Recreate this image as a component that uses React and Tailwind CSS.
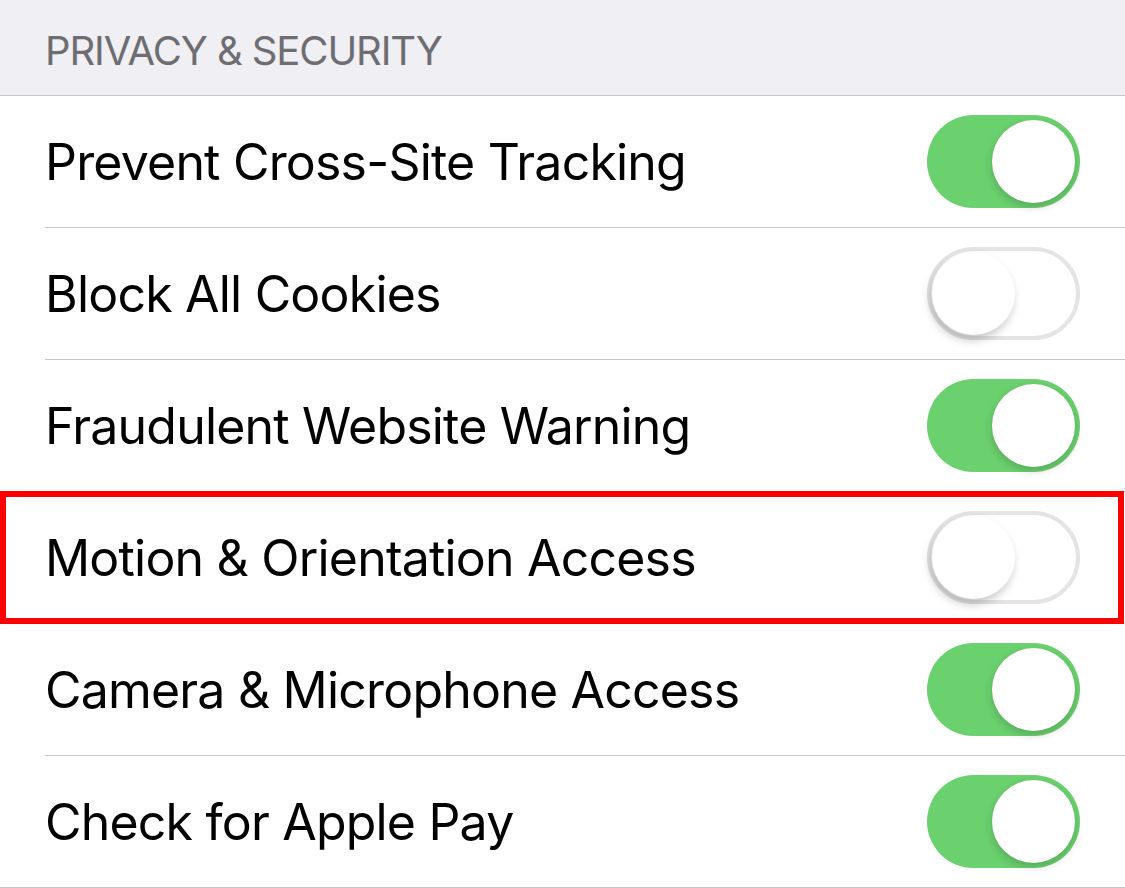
import { useState } from 'react';

const rows = [
  { label: 'Prevent Cross-Site Tracking', on: true },
  { label: 'Block All Cookies', on: false },
  { label: 'Fraudulent Website Warning', on: true },
  { label: 'Motion & Orientation Access', on: false, marked: true },
  { label: 'Camera & Microphone Access', on: true },
  { label: 'Check for Apple Pay', on: true },
];

function Toggle({ on, onClick }) {
  return (
    <button
      onClick={onClick}
      className={`relative w-[153px] h-[93px] rounded-full shrink-0 ${
        on ? 'bg-[#6bd06e]' : 'bg-white border-[4px] border-[#e4e4e6]'
      }`}
    >
      <span
        className={`absolute w-[83px] h-[83px] rounded-full bg-white ${
          on
            ? 'right-[5px] top-[5px] shadow-[0_4px_8px_rgba(0,0,0,0.18)]'
            : 'left-[1px] top-[1px] shadow-[-2px_5px_10px_rgba(0,0,0,0.22)]'
        }`}
      />
    </button>
  );
}

export default function App() {
  const [state, setState] = useState(rows.map((r) => r.on));

  return (
    <div
      className="w-[1125px] h-[888px] bg-white overflow-hidden"
      style={{ fontFamily: 'Inter, "Noto Sans", sans-serif' }}
    >
      <div className="h-[96px] bg-[#efeff4] border-b border-[#c8c7cc] flex items-end pl-[45px] pb-[24px]">
        <span className="text-[40px] leading-none text-[#6d6d72] tracking-[-1.1px]">PRIVACY &amp; SECURITY</span>
      </div>

      {rows.map((row, i) => {
        const last = i === rows.length - 1;
        return (
          <div key={row.label} className="relative">
            <div className="h-[131px] flex items-center justify-between pl-[45px] pr-[45px]">
              <span className="text-[50px] leading-none text-black tracking-[-0.8px]">{row.label}</span>
              <Toggle
                on={state[i]}
                onClick={() => setState((s) => s.map((v, j) => (j === i ? !v : v)))}
              />
            </div>
            <div className={`h-px bg-[#c8c7cc] ${last ? '' : 'ml-[45px]'}`} />
            {/* red highlight box */}
            {row.marked && (
              <div className="absolute left-0 top-[-1px] w-[1124px] h-[133px] border-[6px] border-[#ff0000] pointer-events-none" />
            )}
          </div>
        );
      })}
    </div>
  );
}
